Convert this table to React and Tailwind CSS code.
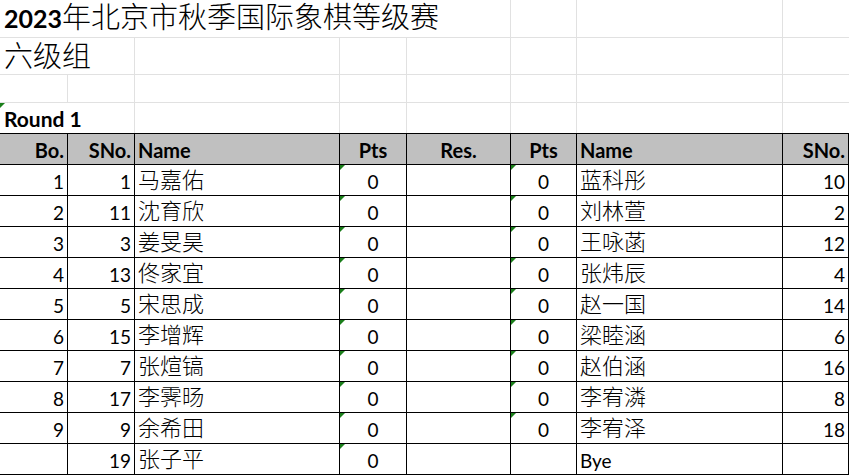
import React from 'react';

const font = "font-['Lato','Noto_Sans_CJK_SC',sans-serif]";

const cols = ['w-[68px]', 'w-[67px]', 'w-[205px]', 'w-[67px]', 'w-[104px]', 'w-[66px]', 'w-[206px]', 'w-[66px]'];

const pairs = [
  [1, 1, '马嘉佑', '蓝科彤', 10],
  [2, 11, '沈育欣', '刘林萱', 2],
  [3, 3, '姜旻昊', '王咏菡', 12],
  [4, 13, '佟家宜', '张炜辰', 4],
  [5, 5, '宋思成', '赵一国', 14],
  [6, 15, '李增辉', '梁睦涵', 6],
  [7, 7, '张煊镐', '赵伯涵', 16],
  [8, 17, '李霁旸', '李宥潾', 8],
  [9, 9, '余希田', '李宥泽', 18],
];

function Flag() {
  return (
    <svg className="absolute left-0 top-0" width="5" height="5" viewBox="0 0 5 5">
      <polygon points="0,0 5,0 0,5" fill="#1a7f1a" />
    </svg>
  );
}

function Cell({ w, align = 'right', flag, children, className = '' }) {
  const justify = align === 'right' ? 'justify-end' : align === 'center' ? 'justify-center' : 'justify-start';
  return (
    <div className={`relative flex shrink-0 items-end ${justify} h-full px-[3px] pb-[4px] border-r border-black ${w} ${className}`}>
      {flag && <Flag />}
      {children}
    </div>
  );
}

export default function App() {
  return (
    <div className={`w-[849px] h-[475px] overflow-hidden bg-white text-black ${font}`}>
      {/* title */}
      <div className="flex h-[38px] border-b border-[#e1e1e1]">
        <div className="flex items-end w-[511px] shrink-0 pl-[4px] pb-[6px] border-r border-[#e1e1e1] whitespace-nowrap">
          <span className="text-[25px] font-bold leading-none">2023</span>
          <span className="text-[29px] font-light leading-none">年北京市秋季国际象棋等级赛</span>
        </div>
        <div className="w-[66px] shrink-0 border-r border-[#e1e1e1]" />
        <div className="w-[206px] shrink-0 border-r border-[#e1e1e1]" />
        <div className="w-[66px] shrink-0" />
      </div>

      {/* group */}
      <div className="flex h-[37px] border-b border-[#e1e1e1]">
        <div className="flex items-end w-[135px] shrink-0 pl-[4px] pb-[4px] border-r border-[#e1e1e1] whitespace-nowrap">
          <span className="text-[29px] font-light leading-none">六级组</span>
        </div>
        {cols.slice(2).map((w, i) => (
          <div key={i} className={`${w} shrink-0 ${i < 5 ? 'border-r border-[#e1e1e1]' : ''}`} />
        ))}
      </div>

      {/* blank */}
      <div className="flex h-[28px] border-b border-[#e1e1e1]">
        {cols.map((w, i) => (
          <div key={i} className={`${w} shrink-0 ${i < 7 ? 'border-r border-[#e1e1e1]' : ''}`} />
        ))}
      </div>

      {/* round */}
      <div className="flex h-[31px] border-b border-black">
        <div className="relative flex items-end w-[135px] shrink-0 pl-[4px] pb-[4px] border-r border-[#e1e1e1] whitespace-nowrap">
          <Flag />
          <span className="text-[21px] font-bold leading-none">Round 1</span>
        </div>
        {cols.slice(2).map((w, i) => (
          <div key={i} className={`${w} shrink-0 ${i < 5 ? 'border-r border-[#e1e1e1]' : ''}`} />
        ))}
      </div>

      {/* header */}
      <div className="flex h-[31px] border-b border-black bg-[#c0c0c0] text-[20px] font-bold leading-none">
        <Cell w={cols[0]}>Bo.</Cell>
        <Cell w={cols[1]}>SNo.</Cell>
        <Cell w={cols[2]} align="left">Name</Cell>
        <Cell w={cols[3]} align="center">Pts</Cell>
        <Cell w={cols[4]} align="center">Res.</Cell>
        <Cell w={cols[5]} align="center">Pts</Cell>
        <Cell w={cols[6]} align="left">Name</Cell>
        <Cell w={cols[7]}>SNo.</Cell>
      </div>

      {pairs.map(([bo, s1, n1, n2, s2]) => (
        <div key={bo} className="flex h-[31px] border-b border-black text-[19px] leading-none">
          <Cell w={cols[0]}>{bo}</Cell>
          <Cell w={cols[1]}>{s1}</Cell>
          <Cell w={cols[2]} align="left" className="text-[22px] font-light">{n1}</Cell>
          <Cell w={cols[3]} align="center" flag>0</Cell>
          <Cell w={cols[4]} />
          <Cell w={cols[5]} align="center" flag>0</Cell>
          <Cell w={cols[6]} align="left" className="text-[22px] font-light">{n2}</Cell>
          <Cell w={cols[7]}>{s2}</Cell>
        </div>
      ))}

      <div className="flex h-[31px] border-b border-black text-[19px] leading-none">
        <Cell w={cols[0]} />
        <Cell w={cols[1]}>19</Cell>
        <Cell w={cols[2]} align="left" className="text-[22px] font-light">张子平</Cell>
        <Cell w={cols[3]} align="center" flag>0</Cell>
        <Cell w={cols[4]} />
        <Cell w={cols[5]} />
        <Cell w={cols[6]} align="left">Bye</Cell>
        <Cell w={cols[7]} />
      </div>
    </div>
  );
}
